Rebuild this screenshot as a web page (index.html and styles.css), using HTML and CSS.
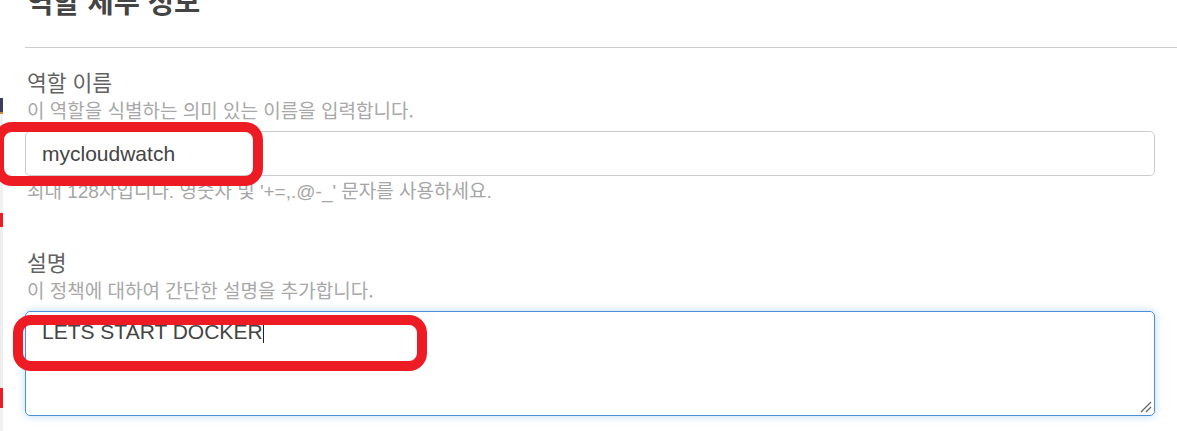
FILE: index.html
```html
<!DOCTYPE html>
<html lang="ko">
<head>
<meta charset="utf-8">
<title>역할 세부 정보</title>
<link rel="stylesheet" href="styles.css">
</head>
<body>
<div class="page">
  <div class="edge">
    <div class="seg seg-white"></div>
    <div class="seg seg-navy"></div>
    <div class="seg seg-orange"></div>
    <div class="seg seg-gray"></div>
    <div class="seg seg-red1"></div>
    <div class="seg seg-gray2"></div>
    <div class="seg seg-red2"></div>
    <div class="seg seg-gray3"></div>
  </div>
  <main class="main">
    <h1 class="title">역할 세부 정보</h1>
    <div class="rule"></div>

    <section class="field">
      <div class="label">역할 이름</div>
      <div class="desc">이 역할을 식별하는 의미 있는 이름을 입력합니다.</div>
      <div class="input-wrap">
        <div class="input">mycloudwatch</div>
        <div class="mark mark-name"></div>
      </div>
      <div class="hint">최대 128자입니다. 영숫자 및 '+=,.@-_' 문자를 사용하세요.</div>
    </section>

    <section class="field field-desc">
      <div class="label">설명</div>
      <div class="desc">이 정책에 대하여 간단한 설명을 추가합니다.</div>
      <div class="input-wrap">
        <div class="textarea"><span class="value">LETS START DOCKER</span><span class="caret"></span>
          <svg class="grip" width="12" height="12" viewBox="0 0 12 12"><path d="M1 11 L11 1 M6 11 L11 6" stroke="#666" stroke-width="1.3" fill="none"/></svg>
        </div>
        <div class="mark mark-desc"></div>
      </div>
    </section>
  </main>
</div>
</body>
</html>
```

FILE: styles.css
```css
html, body {
  margin: 0;
  padding: 0;
  background: #fff;
  overflow: hidden;
}
body {
  width: 1177px;
  height: 431px;
  font-family: "Liberation Sans", "Noto Sans CJK KR", sans-serif;
}
.page {
  display: flex;
  height: 431px;
}
.edge {
  width: 3px;
  flex: 0 0 3px;
  display: flex;
  flex-direction: column;
}
.seg { width: 3px; }
.seg-white { height: 98px; background: #fff; }
.seg-navy { height: 14px; background: #3a3f5c; }
.seg-orange { height: 6px; background: #f4f4f4; border-top: 2px solid #d08a3a; box-sizing: border-box; }
.seg-gray { height: 95px; background: #f1f1f1; }
.seg-red1 { height: 14px; background: #ed1c24; }
.seg-gray2 { height: 161px; background: #eeeeee; }
.seg-red2 { height: 20px; background: #ed1c24; }
.seg-gray3 { flex: 1; background: #f1f1f1; }

.main {
  flex: 1;
  padding-left: 22px;
  min-width: 0;
}
.title {
  margin: -15px 0 0 2px;
  font-family: "Noto Sans CJK KR", sans-serif;
  font-size: 28.5px;
  line-height: 31px;
  font-weight: 700;
  color: #444;
}
.rule {
  margin-top: 31px;
  border-top: 1px solid #cccccc;
}
.field {
  margin-right: 22px;
  padding-top: 22px;
}
.field-desc {
  padding-top: 47px;
}
.label {
  margin-left: 2px;
  font-family: "Noto Sans CJK KR", sans-serif;
  font-size: 21.5px;
  line-height: 24px;
  color: #626262;
}
.desc {
  margin: 4.5px 0 0 2px;
  font-family: "Noto Sans CJK KR", sans-serif;
  font-size: 19px;
  line-height: 22px;
  color: #a8a8a8;
}
.input-wrap {
  position: relative;
  margin-top: 10.5px;
}
.input {
  height: 45px;
  box-sizing: border-box;
  border: 1px solid #cccccc;
  border-radius: 5px;
  padding: 0 16px;
  display: flex;
  align-items: center;
  font-size: 21px;
  color: #444;
}
.hint {
  margin: 5px 0 0 2px;
  font-size: 19px;
  line-height: 22px;
  color: #a6a6a6;
}
.textarea {
  position: relative;
  height: 105px;
  box-sizing: border-box;
  border: 1px solid #4a8fdb;
  border-radius: 5px;
  box-shadow: 0 0 8px rgba(102, 175, 233, 0.45);
  padding: 8px 16px;
  font-size: 21px;
  line-height: 24px;
  color: #444;
}
.caret {
  display: inline-block;
  width: 1px;
  height: 22px;
  background: #222;
  vertical-align: -4px;
}
.grip {
  position: absolute;
  right: 2px;
  bottom: 2px;
}
.mark {
  position: absolute;
  border: 10px solid #ed1c24;
  border-radius: 18px;
  box-sizing: border-box;
  pointer-events: none;
}
.mark-name {
  left: -31px;
  top: -9px;
  width: 269px;
  height: 64px;
}
.mark-desc {
  left: -12px;
  top: 4px;
  width: 414px;
  height: 56px;
}
```
